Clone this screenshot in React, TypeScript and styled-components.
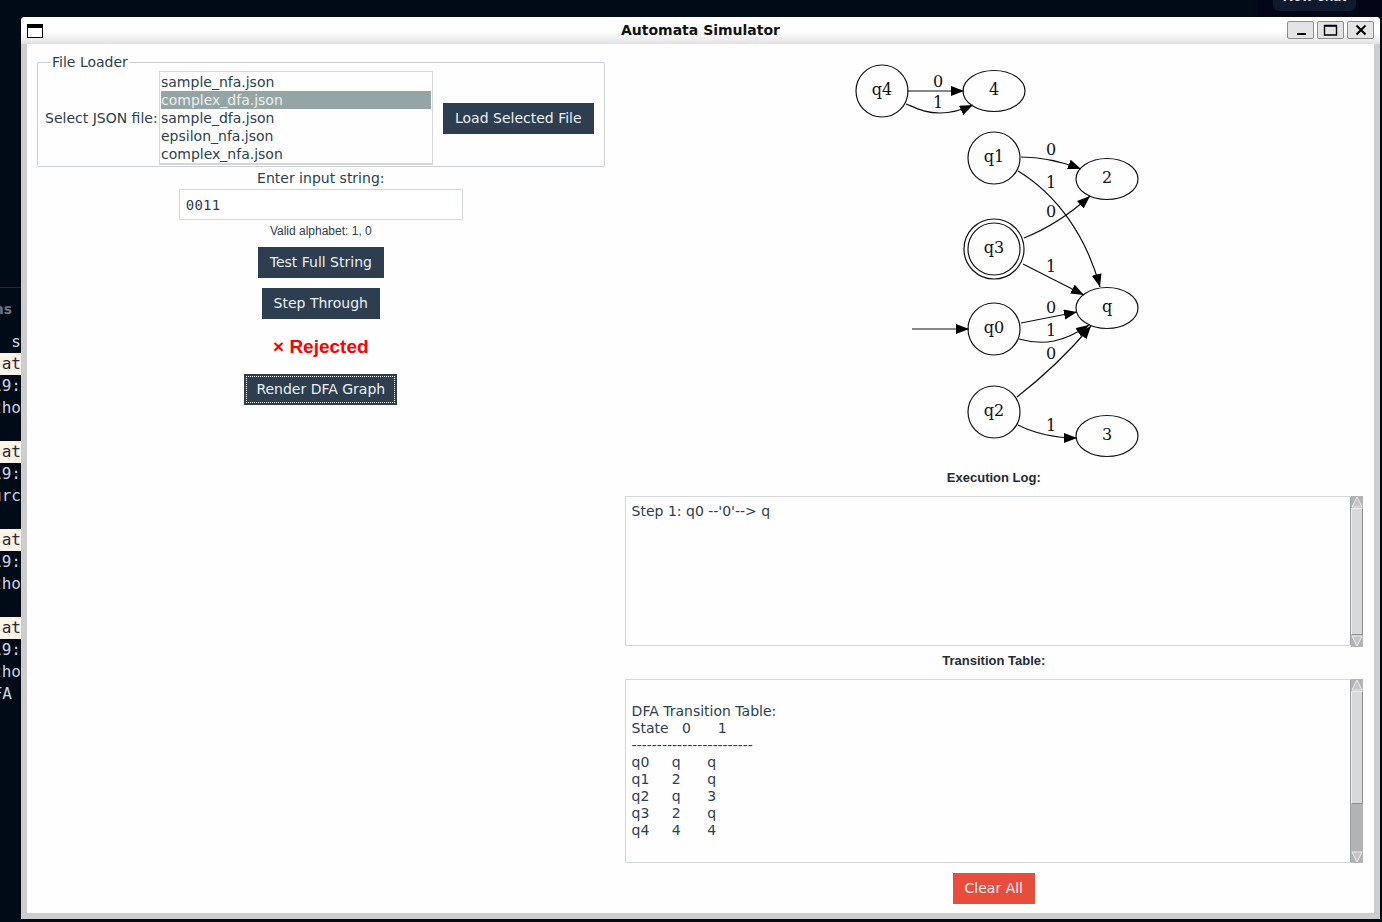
import React from 'react';
import styled, {createGlobalStyle} from 'styled-components';

const GlobalStyle = createGlobalStyle`
  html, body {
    margin: 0;
    padding: 0;
    background: #000b18;
  }
`;

const UI_FONT = `"DejaVu Sans", "Noto Sans", sans-serif`;
const BOLD_FONT = `"Liberation Sans", Arial, sans-serif`;

const Desktop = styled.div`
  position: relative;
  width: 1382px;
  height: 922px;
  overflow: hidden;
  background: #000b18;
`;
const TopRightShade = styled.div`
  position: absolute;
  left: 1258px;
  right: 0;
  top: 0;
  height: 17px;
  background: #020617;
`;
const NewChat = styled.div`
  position: absolute;
  left: 1273px;
  top: 0;
  width: 83px;
  height: 11px;
  overflow: hidden;
  background: #101a2e;
  border-radius: 0 0 6px 6px;
  color: #e6eaf2;
  font: 600 14px/14px "Inter", sans-serif;
  text-align: center;
  > span {
    display: block;
    margin-top: -11px;
  }
`;
const Terminal = styled.div`
  position: absolute;
  left: 0;
  top: 287px;
  width: 21px;
  border-top: 1px solid #22293a;
  font: 16px/22px "DejaVu Sans Mono", monospace;
  color: #cbd5e1;
`;
const TerminalHead = styled.div`
  display: flex;
  justify-content: flex-end;
  margin: 10px 0 11px;
  padding-right: 9px;
  height: 22px;
  font: 700 14px/22px ${UI_FONT};
  color: #6b7280;
`;
const TerminalRow = styled.div<{$band?: boolean; $inset?: number}>`
  display: flex;
  justify-content: flex-end;
  height: 22px;
  overflow: hidden;
  white-space: pre;
  padding-right: ${p => p.$inset ?? 0}px;
  background: ${p => (p.$band ? '#fdf3e6' : 'transparent')};
  color: ${p => (p.$band ? '#1e293b' : '#cbd5e1')};
`;

const Window = styled.div`
  position: absolute;
  left: 21px;
  top: 17px;
  width: 1359px;
  height: 902px;
  display: flex;
  flex-direction: column;
  background: #cdcdcd;
  border-radius: 4px 4px 0 0;
  overflow: hidden;
`;
const TitleBar = styled.div`
  position: relative;
  flex: 0 0 27px;
  display: flex;
  align-items: center;
  justify-content: space-between;
  padding: 0 6px;
  background: linear-gradient(#ffffff 0%, #ffffff 55%, #e2e2e2 100%);
`;
const WindowIcon = styled.div`
  width: 16px;
  height: 14px;
  box-sizing: border-box;
  border: 1.5px solid #000;
  border-top-width: 4px;
  background: #fff;
`;
const Title = styled.div`
  position: absolute;
  left: 0;
  width: 1359px;
  text-align: center;
  font: 700 14px/27px ${UI_FONT};
  color: #111;
`;
const WindowButtons = styled.div`
  display: flex;
  gap: 3px;
  margin-top: -1px;
`;
const WindowButton = styled.div`
  width: 27px;
  height: 18px;
  box-sizing: border-box;
  border: 1px solid #8c8c8c;
  border-radius: 2px;
  background: #e4e4e4;
  display: flex;
  align-items: center;
  justify-content: center;
`;
const Body = styled.div`
  flex: 1;
  display: flex;
  gap: 20px;
  margin: 0 6px 6px;
  padding: 9px 11px 0 10px;
  background: #fefefe;
  font: 14px/18px ${UI_FONT};
  color: #2c3e50;
`;
const LeftColumn = styled.div`
  flex: 0 0 560px;
  display: flex;
  flex-direction: column;
  align-items: center;
`;
const RightColumn = styled.div`
  flex: 1;
  display: flex;
  flex-direction: column;
  align-items: center;
`;
const Loader = styled.fieldset`
  box-sizing: border-box;
  width: 560px;
  height: 114px;
  margin: 0;
  padding: 0 10px 0 7px;
  border: 1px solid #ccd1d6;
  border-radius: 2px;
  display: flex;
  align-items: center;
`;
const LoaderLegend = styled.legend`
  padding: 0 1px;
  margin-left: 6px;
  line-height: 18px;
  color: #2c3e50;
`;
const LoaderRow = styled.div`
  display: flex;
  align-items: center;
  height: 94px;
`;
const SelectLabel = styled.div`
  width: 114px;
  white-space: nowrap;
`;
const FileList = styled.div`
  box-sizing: border-box;
  width: 274px;
  height: 94px;
  padding: 1px;
  border: 1px solid #d3d6da;
  border-bottom-width: 2px;
`;
const FileItem = styled.div<{$selected?: boolean}>`
  height: 18px;
  padding-left: 0;
  white-space: nowrap;
  background: ${p => (p.$selected ? '#95a5a6' : 'transparent')};
  color: ${p => (p.$selected ? '#ecf0f1' : '#2c3e50')};
`;
const ActionButton = styled.button<{$tone?: 'dark' | 'red'; $focused?: boolean}>`
  position: relative;
  box-sizing: border-box;
  height: 31px;
  padding: 0 12px;
  border: 0;
  background: ${p => (p.$tone === 'red' ? '#e74c3c' : '#2c3e50')};
  color: #ecf0f1;
  font: 14px/31px ${UI_FONT};
  white-space: nowrap;
  outline: ${p => (p.$focused ? '1px dotted #fff' : 'none')};
  outline-offset: -3px;
`;
const LoadButton = styled(ActionButton)`
  margin-left: 10px;
`;
const FieldLabel = styled.div`
  margin-top: 2px;
`;
const InputBox = styled.input`
  box-sizing: border-box;
  width: 284px;
  height: 31px;
  margin-top: 2px;
  padding: 0 6px;
  border: 1px solid #d3d6da;
  border-radius: 1px;
  background: #fff;
  color: #2c3e50;
  font: 14px "DejaVu Sans Mono", monospace;
  letter-spacing: 0.2px;
`;
const Hint = styled.div`
  margin-top: 2px;
  margin-bottom: 7px;
  font: 12px/18px ${BOLD_FONT};
`;
const StepButton = styled(ActionButton)`
  margin-top: 10px;
`;
const Result = styled.div`
  margin-top: 17px;
  font: 700 19px/22px ${BOLD_FONT};
  color: #ff0000;
`;
const RenderButton = styled(ActionButton)`
  margin-top: 16px;
`;
const Graph = styled.svg`
  display: block;
  flex: 0 0 413px;
  width: 300px;
  height: 413px;
`;
const SectionLabel = styled.div<{$top: number}>`
  margin-top: ${p => p.$top}px;
  height: 18px;
  font: 700 13px/18px ${BOLD_FONT};
  color: #222b36;
`;
const OutputBox = styled.div<{$height: number}>`
  box-sizing: border-box;
  align-self: stretch;
  height: ${p => p.$height}px;
  margin-top: 9px;
  display: flex;
  border: 1px solid #d3d6da;
  border-right: 0;
`;
const OutputText = styled.pre`
  flex: 1;
  margin: 0;
  padding: 6px 6px;
  font: 14px/17px ${UI_FONT};
  color: #2c3e50;
  border-right: 1px solid #9aa0a6;
`;
const ScrollBar = styled.div`
  flex: 0 0 12px;
  display: flex;
  flex-direction: column;
  margin-top: -1px;
  margin-bottom: -1px;
  background: #b3b3b3;
`;
const ScrollArrow = styled.div`
  flex: 0 0 12px;
  display: flex;
  align-items: center;
  justify-content: center;
  background: #b3b3b3;
`;
const ScrollTrack = styled.div`
  flex: 1;
  display: flex;
  flex-direction: column;
`;
const ScrollThumb = styled.div<{$size: number}>`
  box-sizing: border-box;
  flex: 0 0 ${p => p.$size}px;
  background: #d9d9d9;
  border: 1px solid #8f8f8f;
  border-top-color: #eeeeee;
  border-left-color: #eeeeee;
`;
const ClearButton = styled(ActionButton)`
  margin-top: 10px;
`;

const files = ['sample_nfa.json', 'complex_dfa.json', 'sample_dfa.json', 'epsilon_nfa.json', 'complex_nfa.json'];

const states = [
  {id: 'q4', x: 878, y: 91},
  {id: 'q1', x: 990, y: 158},
  {id: 'q3', x: 990, y: 249},
  {id: 'q0', x: 990, y: 329},
  {id: 'q2', x: 990, y: 412},
];
const targets = [
  {id: '4', x: 990, y: 91},
  {id: '2', x: 1103, y: 179},
  {id: 'q', x: 1103, y: 308},
  {id: '3', x: 1103, y: 436},
];
const edges = [
  'M903 91 L960 91',
  'M902 104 C914 109 922 113 936 113 C948 113 958 110 969 105',
  'M1017 157 C1036 157 1056 161 1077 169',
  'M1014 171 C1052 194 1082 235 1096 287',
  'M1020 238 C1045 228 1066 214 1086 196',
  'M1019 264 L1080 295',
  'M1017 323 L1073 312',
  'M1015 339 C1040 346 1060 342 1085 325',
  'M1013 397 C1040 376 1065 352 1087 326',
  'M1014 425 C1030 433 1050 438 1073 438',
  'M908 329 L965 329',
];
const edgeLabels = [
  {t: '0', x: 934, y: 87},
  {t: '1', x: 934, y: 108},
  {t: '0', x: 1047, y: 155},
  {t: '1', x: 1047, y: 188},
  {t: '0', x: 1047, y: 217},
  {t: '1', x: 1047, y: 272},
  {t: '0', x: 1047, y: 313},
  {t: '1', x: 1047, y: 336},
  {t: '0', x: 1047, y: 359},
  {t: '1', x: 1047, y: 431},
];

function DfaGraph() {
  const serif = {fontFamily: '"DejaVu Serif", serif', fontSize: 16, fill: '#111', textAnchor: 'middle' as const};
  return (
    <Graph viewBox="840 53 300 413">
      <defs>
        <marker id="head" markerUnits="userSpaceOnUse" markerWidth="14" markerHeight="12"
                refX="13" refY="5" orient="auto">
          <path d="M0 0 L13 5 L0 10 Z" fill="#000"/>
        </marker>
      </defs>
      {edges.map(d => <path key={d} d={d} fill="none" stroke="#111" strokeWidth="1.2" markerEnd="url(#head)"/>)}
      {states.map(s => (
        <g key={s.id}>
          <circle cx={s.x} cy={s.y} r="26" fill="none" stroke="#111" strokeWidth="1.2"/>
          {s.id === 'q3' && <circle cx={s.x} cy={s.y} r="30" fill="none" stroke="#111" strokeWidth="1.2"/>}
          <text x={s.x} y={s.y + 4} {...serif}>{s.id}</text>
        </g>
      ))}
      {targets.map(s => (
        <g key={s.id}>
          <ellipse cx={s.x} cy={s.y} rx="31" ry="20.5" fill="none" stroke="#111" strokeWidth="1.2"/>
          <text x={s.x} y={s.y + 4} {...serif}>{s.id}</text>
        </g>
      ))}
      {edgeLabels.map(l => <text key={`${l.x}-${l.y}`} x={l.x} y={l.y} {...serif}>{l.t}</text>)}
    </Graph>
  );
}

function Arrow({up}: {up?: boolean}) {
  return (
    <svg width="12" height="12" viewBox="0 0 12 12">
      <path d={up ? 'M6 1 L11 11 L1 11 Z' : 'M1 1 L11 1 L6 11 Z'} fill="#c4c4c4" stroke="#eeeeee" strokeWidth="1"/>
    </svg>
  );
}

function Scroller({thumb}: {thumb: number}) {
  return (
    <ScrollBar>
      <ScrollArrow><Arrow up/></ScrollArrow>
      <ScrollTrack><ScrollThumb $size={thumb}/></ScrollTrack>
      <ScrollArrow><Arrow/></ScrollArrow>
    </ScrollBar>
  );
}

const tableText = `
DFA Transition Table:
State   0      1
------------------------
q0     q      q
q1     2      q
q2     q      3
q3     2      q
q4     4      4`;

function App() {
  return (
    <Desktop>
      <GlobalStyle/>
      <TopRightShade/>
      <NewChat><span>New chat</span></NewChat>
      <Terminal>
        <TerminalHead>ns</TerminalHead>
        <TerminalRow>s</TerminalRow>
        <TerminalRow $band>at</TerminalRow>
        <TerminalRow>19:</TerminalRow>
        <TerminalRow>tho</TerminalRow>
        <TerminalRow/>
        <TerminalRow $band>at</TerminalRow>
        <TerminalRow>19:</TerminalRow>
        <TerminalRow>urc</TerminalRow>
        <TerminalRow/>
        <TerminalRow $band>at</TerminalRow>
        <TerminalRow>19:</TerminalRow>
        <TerminalRow>tho</TerminalRow>
        <TerminalRow/>
        <TerminalRow $band>at</TerminalRow>
        <TerminalRow>19:</TerminalRow>
        <TerminalRow>tho</TerminalRow>
        <TerminalRow $inset={9}>FA</TerminalRow>
      </Terminal>
      <Window>
        <TitleBar>
          <WindowIcon/>
          <Title>Automata Simulator</Title>
          <WindowButtons>
            <WindowButton>
              <svg width="12" height="12" viewBox="0 0 12 12"><path d="M2 10 H11" stroke="#000" strokeWidth="2"/></svg>
            </WindowButton>
            <WindowButton>
              <svg width="15" height="12" viewBox="0 0 15 12">
                <path d="M1 1.5 H14 M1.5 1 V11 H13.5 V1" fill="none" stroke="#000" strokeWidth="1.4"/>
                <path d="M1 2 H14" stroke="#000" strokeWidth="1.6"/>
              </svg>
            </WindowButton>
            <WindowButton>
              <svg width="12" height="12" viewBox="0 0 12 12"><path d="M1.5 1.5 L10.5 10.5 M10.5 1.5 L1.5 10.5" stroke="#000" strokeWidth="2"/></svg>
            </WindowButton>
          </WindowButtons>
        </TitleBar>
        <Body>
          <LeftColumn>
            <Loader>
              <LoaderLegend>File Loader</LoaderLegend>
              <LoaderRow>
                <SelectLabel>Select JSON file:</SelectLabel>
                <FileList>
                  {files.map((f, i) => <FileItem key={f} $selected={i === 1}>{f}</FileItem>)}
                </FileList>
                <LoadButton>Load Selected File</LoadButton>
              </LoaderRow>
            </Loader>
            <FieldLabel>Enter input string:</FieldLabel>
            <InputBox readOnly value="0011"/>
            <Hint>Valid alphabet: 1, 0</Hint>
            <ActionButton>Test Full String</ActionButton>
            <StepButton>Step Through</StepButton>
            <Result>× Rejected</Result>
            <RenderButton $focused>Render DFA Graph</RenderButton>
          </LeftColumn>
          <RightColumn>
            <DfaGraph/>
            <SectionLabel $top={3}>Execution Log:</SectionLabel>
            <OutputBox $height={150}>
              <OutputText>Step 1: q0 --'0'--&gt; q</OutputText>
              <Scroller thumb={127}/>
            </OutputBox>
            <SectionLabel $top={6}>Transition Table:</SectionLabel>
            <OutputBox $height={184}>
              <OutputText>{tableText}</OutputText>
              <Scroller thumb={113}/>
            </OutputBox>
            <ClearButton $tone="red">Clear All</ClearButton>
          </RightColumn>
        </Body>
      </Window>
    </Desktop>
  );
}

export default App;
